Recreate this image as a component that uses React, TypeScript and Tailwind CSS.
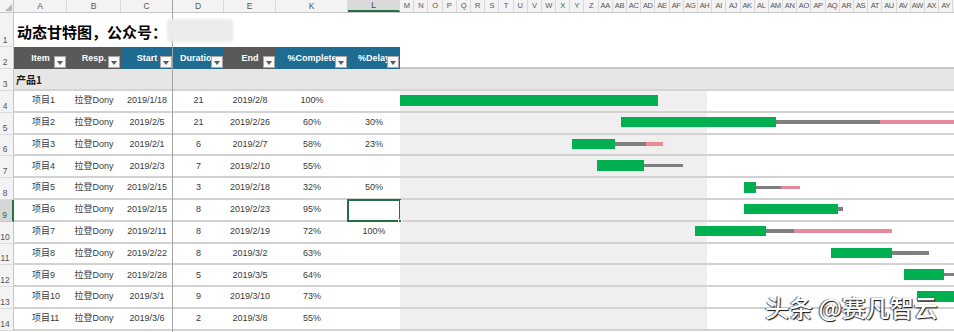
import React from 'react';

const DAY = 12.3;

const COLS = [
  { k: 'A', w: 'w-[53px]' },
  { k: 'B', w: 'w-[54px]' },
  { k: 'C', w: 'w-[52px]' },
  { k: 'D', w: 'w-[51px]' },
  { k: 'E', w: 'w-[52px]' },
  { k: 'K', w: 'w-[72px]' },
  { k: 'L', w: 'w-[52px]' },
];

const GCOLS = [
  'M', 'N', 'O', 'P', 'Q', 'R', 'S', 'T', 'U', 'V', 'W', 'X', 'Y', 'Z',
  'AA', 'AB', 'AC', 'AD', 'AE', 'AF', 'AG', 'AH', 'AI', 'AJ', 'AK', 'AL', 'AM', 'AN', 'AO', 'AP', 'AQ', 'AR', 'AS', 'AT', 'AU', 'AV', 'AW', 'AX', 'AY',
];

const HEADERS = [
  { t: 'Item', w: 'w-[53px]', bg: 'bg-[#595959]' },
  { t: 'Resp.', w: 'w-[54px]', bg: 'bg-[#595959]' },
  { t: 'Start', w: 'w-[52px]', bg: 'bg-[#1f6c92]' },
  { t: 'Duration', w: 'w-[51px]', bg: 'bg-[#1f6c92]' },
  { t: 'End', w: 'w-[52px]', bg: 'bg-[#595959]' },
  { t: '%Complete', w: 'w-[72px]', bg: 'bg-[#1f6c92]' },
  { t: '%Delay', w: 'w-[52px]', bg: 'bg-[#1f6c92]' },
];

type Row = { n: string; s: string; d: number; e: string; c: number; del?: number; off: number };

const ROWS: Row[] = [
  { n: '项目1', s: '2019/1/18', d: 21, e: '2019/2/8', c: 100, off: 0 },
  { n: '项目2', s: '2019/2/5', d: 21, e: '2019/2/26', c: 60, del: 30, off: 18 },
  { n: '项目3', s: '2019/2/1', d: 6, e: '2019/2/7', c: 58, del: 23, off: 14 },
  { n: '项目4', s: '2019/2/3', d: 7, e: '2019/2/10', c: 55, off: 16 },
  { n: '项目5', s: '2019/2/15', d: 3, e: '2019/2/18', c: 32, del: 50, off: 28 },
  { n: '项目6', s: '2019/2/15', d: 8, e: '2019/2/23', c: 95, off: 28 },
  { n: '项目7', s: '2019/2/11', d: 8, e: '2019/2/19', c: 72, del: 100, off: 24 },
  { n: '项目8', s: '2019/2/22', d: 8, e: '2019/3/2', c: 63, off: 35 },
  { n: '项目9', s: '2019/2/28', d: 5, e: '2019/3/5', c: 64, off: 41 },
  { n: '项目10', s: '2019/3/1', d: 9, e: '2019/3/10', c: 73, off: 42 },
  { n: '项目11', s: '2019/3/6', d: 2, e: '2019/3/8', c: 55, off: 47 },
];

function RowNum({ n, sel }: { n: number; sel?: boolean }) {
  return (
    <div
      className={
        'w-[14px] shrink-0 flex items-end justify-center pr-[3px] pb-[1px] text-[8.5px] leading-[10px] border-b border-r ' +
        (sel
          ? 'bg-[#d6d6d6] text-[#217346] border-b-[#c8c8c8] border-r-2 border-r-[#217346]'
          : 'bg-[#f3f3f3] text-[#555] border-b-[#dadada] border-r-[#c6c6c6]')
      }
    >
      {n}
    </div>
  );
}

function Drop() {
  return (
    <span className="absolute right-[1px] bottom-[1px] w-[12px] h-[12px] bg-[#f7f7f7] border border-[#a8a8a8] flex justify-center pt-[4px]">
      <svg width="6" height="4" viewBox="0 0 6 4">
        <path d="M0 0H6L3 4Z" fill="#5a5a5a" />
      </svg>
    </span>
  );
}

function Bars({ r }: { r: Row }) {
  const x = r.off * DAY;
  const w = r.d * DAY;
  const g = (w * r.c) / 100;
  const p = r.del ? (w * r.del) / 100 : 0;
  return (
    <>
      <div className="absolute top-[7.5px] h-[3.5px] bg-[#7f7f7f]" style={{ left: x, width: w }} />
      {p > 0 && <div className="absolute top-[7.5px] h-[3.5px] bg-[#e8899b]" style={{ left: x + w, width: p }} />}
      <div className="absolute top-[4px] h-[10.5px] bg-[#00b050]" style={{ left: x, width: g }} />
    </>
  );
}

export default function App() {
  return (
    <div className="relative w-[954px] h-[332px] overflow-hidden bg-white text-[#3a3a3a] font-['Liberation_Sans','Noto_Sans_CJK_SC',sans-serif]">
      {/* column header row */}
      <div className="flex h-[13px] bg-[#f3f3f3] border-b border-[#c6c6c6]">
        <div className="w-[14px] shrink-0 border-r border-[#c6c6c6] flex items-end justify-end p-[1px]">
          <svg width="7" height="7" viewBox="0 0 7 7">
            <path d="M7 0V7H0Z" fill="#b7b7b7" />
          </svg>
        </div>
        {COLS.map((c) => (
          <div
            key={c.k}
            className={
              c.w +
              ' shrink-0 flex items-center justify-center text-[8.5px] border-r border-[#d9d9d9] ' +
              (c.k === 'L' ? 'bg-[#dadada] border-b-2 border-b-[#217346] text-[#444]' : 'text-[#555]')
            }
          >
            {c.k}
          </div>
        ))}
        <div className="flex flex-1 overflow-hidden">
          {GCOLS.map((g) => (
            <div
              key={g}
              className="w-[14.2px] shrink-0 flex items-center justify-center text-[7.5px] tracking-[-0.4px] text-[#555] border-r border-[#d9d9d9]"
            >
              {g}
            </div>
          ))}
        </div>
      </div>

      {/* row 1 title */}
      <div className="flex h-[34px]">
        <RowNum n={1} />
        <div className="flex flex-1 items-center pl-[3px] pt-[2px]">
          <span className="font-['Noto_Sans_CJK_SC',sans-serif] font-bold text-[15px] text-black leading-none">
            动态甘特图，公众号：
          </span>
          <div className="w-[66px] h-[23px] bg-[#ebebeb] blur-[1.5px] rounded-[3px] -mt-[2px] relative z-10" />
        </div>
      </div>

      {/* row 2 headers */}
      <div className="flex h-[22px]">
        <RowNum n={2} />
        {HEADERS.map((h) => (
          <div
            key={h.t}
            className={
              h.w +
              ' ' +
              h.bg +
              ' shrink-0 relative overflow-hidden flex items-center justify-center pt-[2px] whitespace-nowrap text-white font-bold text-[9px]'
            }
          >
            {h.t}
            <Drop />
          </div>
        ))}
        <div className="flex-1 border-b-2 border-[#c9c9c9]" />
      </div>

      {/* row 3 group */}
      <div className="flex h-[22px]">
        <RowNum n={3} />
        <div className="flex flex-1 items-center pl-[2px] bg-[#e6e6e6] border-b-2 border-[#d4d4d4] font-bold text-[10px] text-[#1a1a1a] font-['Noto_Sans_CJK_SC',sans-serif]">
          产品1
        </div>
      </div>

      {/* data rows */}
      {ROWS.map((r, i) => (
        <div key={r.n} className="flex h-[21.8px]">
          <RowNum n={i + 4} sel={i === 5} />
          <div className="flex flex-1 border-b-2 border-[#d2d2d2] text-[9px]">
            <div className="w-[53px] shrink-0 flex items-center pl-[18px]">{r.n}</div>
            <div className="w-[54px] shrink-0 flex items-center justify-center">拉登Dony</div>
            <div className="w-[52px] shrink-0 flex items-center justify-center">{r.s}</div>
            <div className="w-[51px] shrink-0 flex items-center justify-center">{r.d}</div>
            <div className="w-[52px] shrink-0 flex items-center justify-center">{r.e}</div>
            <div className="w-[72px] shrink-0 flex items-center justify-center">{r.c}%</div>
            <div className="w-[52px] shrink-0 relative flex items-center justify-center">
              {r.del ? `${r.del}%` : ''}
              {i === 5 && (
                <div className="absolute -left-[1px] -top-[1px] -right-[1px] -bottom-[2px] border-2 border-[#217346]">
                  <div className="absolute -right-[3px] -bottom-[3px] w-[4px] h-[4px] bg-[#217346] border border-white" />
                </div>
              )}
            </div>
            <div className="relative flex-1 overflow-hidden bg-[linear-gradient(to_right,#efefef_307px,#ffffff_307px)]">
              <Bars r={r} />
            </div>
          </div>
        </div>
      ))}

      {/* freeze pane line */}
      <div className="absolute left-[172px] top-0 w-px h-full bg-[#a3a3a3]" />

      {/* watermark */}
      <div className="absolute left-[765px] top-[292px] text-[24px] leading-[30px] text-white font-medium font-['Noto_Sans_CJK_SC',sans-serif] [text-shadow:1px_1px_1px_#111,-1px_0_1px_#444]">
        头条 @赛凡智云
      </div>
    </div>
  );
}
